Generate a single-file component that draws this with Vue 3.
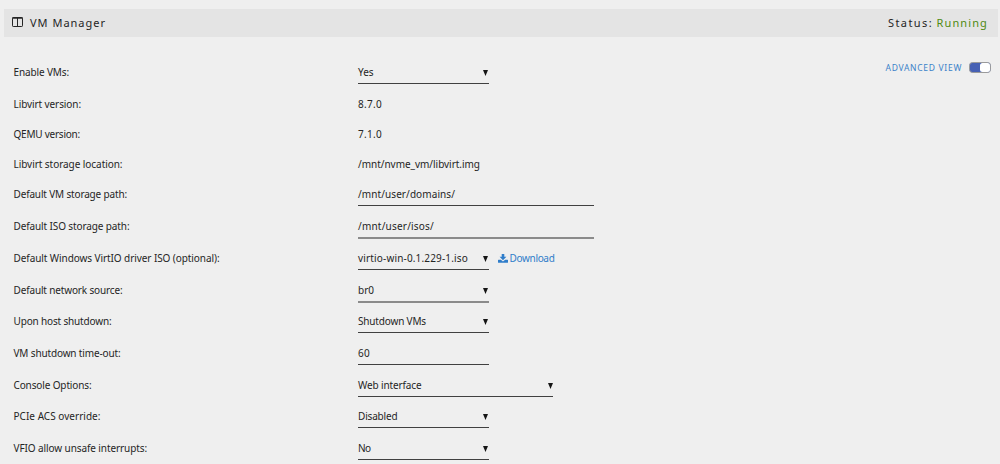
<script setup>
// Each row: height in px, label and its text width, value and its text width, control kind.
const rows = [
  { h: 32, label: 'Enable VMs:', lw: 55.5, value: 'Yes', vw: 15.5, kind: 'select' },
  { h: 30, label: 'Libvirt version:', lw: 67.5, value: '8.7.0', vw: 24, kind: 'text' },
  { h: 30, label: 'QEMU version:', lw: 66.5, value: '7.1.0', vw: 24, kind: 'text' },
  { h: 30, label: 'Libvirt storage location:', lw: 109, value: '/mnt/nvme_vm/libvirt.img', vw: 122, kind: 'text' },
  { h: 32, label: 'Default VM storage path:', lw: 113.5, value: '/mnt/user/domains/', vw: 97, kind: 'input' },
  { h: 32, label: 'Default ISO storage path:', lw: 116, value: '/mnt/user/isos/', vw: 76, kind: 'input', soft: true },
  { h: 32, label: 'Default Windows VirtIO driver ISO (optional):', lw: 206, value: 'virtio-win-0.1.229-1.iso', vw: 110, kind: 'select', download: true },
  { h: 31, label: 'Default network source:', lw: 109, value: 'br0', vw: 16, kind: 'select', soft: true },
  { h: 32, label: 'Upon host shutdown:', lw: 98, value: 'Shutdown VMs', vw: 68, kind: 'select' },
  { h: 32, label: 'VM shutdown time-out:', lw: 107, value: '60', vw: 12, kind: 'number' },
  { h: 31, label: 'Console Options:', lw: 78, value: 'Web interface', vw: 63.5, kind: 'select', wide: true },
  { h: 32, label: 'PCIe ACS override:', lw: 87, value: 'Disabled', vw: 39.5, kind: 'select' },
  { h: 32, label: 'VFIO allow unsafe interrupts:', lw: 133.5, value: 'No', vw: 12.5, kind: 'select' },
]

// Adjusts tracking so that a label takes its given width.
const vFit = {
  mounted(el, { value }) {
    const natural = el.getBoundingClientRect().width
    el.style.letterSpacing = `${(value - natural) / el.textContent.length}px`
  },
}
</script>

<template>
  <main class="page">
    <header class="title">
      <svg class="columns" viewBox="0 0 11 10" width="11" height="10">
        <path d="M1.2 .5h8.600q.7 0 .7.7v7.600q0 .7-.7.7H1.200q-.7 0-.7-.7V1.200q0-.7.7-.7zM5.500 1v8" />
        <path d="M.5 1h10" class="bar" />
      </svg>
      <span v-fit="76" class="heading">VM Manager</span>
      <span class="status"><span v-fit="45">Status:</span><span v-fit="51.5" class="running">Running</span></span>
    </header>
    <div class="content">
      <div class="form">
        <div v-for="row in rows" :key="row.label" class="row" :style="{ height: row.h + 'px' }">
          <div class="label"><span v-fit="row.lw">{{ row.label }}</span></div>
          <div class="field" :class="[row.kind, { wide: row.wide, soft: row.soft }]">
            <span v-fit="row.vw">{{ row.value }}</span>
            <svg v-if="row.kind === 'select'" class="arrow" width="5" height="6" viewBox="0 0 5 6"><path d="M0 0h5L2.500 6z" /></svg>
          </div>
          <a v-if="row.download" class="download">
            <svg width="10" height="9" viewBox="0 0 10 9">
              <path d="M3.700 0h2.600v2.800h2.100L5 6.300 1.600 2.800h2.100z" />
              <path d="M.5 5.700h2.400L5 7.600l2.100-1.900h2.400q.5 0 .5.5v2.100q0 .5-.5.5h-9Q0 8.800 0 8.300V6.200q0-.5.5-.5z" />
            </svg>
            <span v-fit="45">Download</span>
          </a>
        </div>
      </div>
      <div class="view">
        <span v-fit="76.500">ADVANCED VIEW</span>
        <span class="toggle"><span class="knob"></span></span>
      </div>
    </div>
  </main>
</template>

<style>
body { background: #efefef; overflow: hidden; }
</style>
<style scoped>
.page {
  box-sizing: border-box;
  height: 464px;
  padding: 9px 2px 0 4px;
  overflow: hidden;
  background: #efefef;
  color: #252525;
  font: 10px/22px "Noto Sans", sans-serif;
  white-space: nowrap;
}
.page span { flex-shrink: 0; }
.title {
  display: flex;
  align-items: center;
  height: 28px;
  padding: 0 10px 0 8px;
  background: #e4e4e4;
  font-size: 11px;
}
.columns { margin: 0 7px 2px 0; fill: none; stroke: #252525; stroke-width: 1; }
.columns .bar { stroke-width: 1.500px; }
.heading { margin-bottom: 1px; }
.status { display: flex; gap: 3.500px; margin-left: auto; }
.running { color: #4f8a10; }
.content { display: flex; justify-content: space-between; }
.form { padding: 24px 0 0 9.500px; }
.row { display: flex; align-items: flex-start; }
.label { width: 344.500px; }
.field {
  box-sizing: border-box;
  display: flex;
  align-items: flex-start;
  justify-content: space-between;
  height: 23px;
}
.select, .number { width: 130.500px; border-bottom: 1px solid #404040; }
.input { width: 236px; border-bottom: 1px solid #404040; }
.wide { width: 195px; }
.soft { height: 24px; border-bottom: 2px solid #8b8b8b; }
.arrow { margin: 9px .5px 0 0; fill: #151515; }
.download { display: flex; align-items: flex-start; margin-left: 9px; color: #2f7dca; }
.download svg { margin: 7px 2px 0 0; fill: currentColor; }
.view {
  display: flex;
  align-items: center;
  height: 24px;
  margin: 19px 7px 0 0;
  color: #3b82c9;
  font-size: 8.500px;
}
.toggle {
  box-sizing: border-box;
  width: 22px;
  height: 11px;
  margin: 0 0 1px 7px;
  border: 1px solid #9a9a9a;
  border-radius: 3.500px;
  background: #4660b4;
}
.knob {
  display: block;
  width: 10px;
  height: 9px;
  margin-left: 10px;
  border-radius: 2.500px;
  background: #fff;
}
</style>
